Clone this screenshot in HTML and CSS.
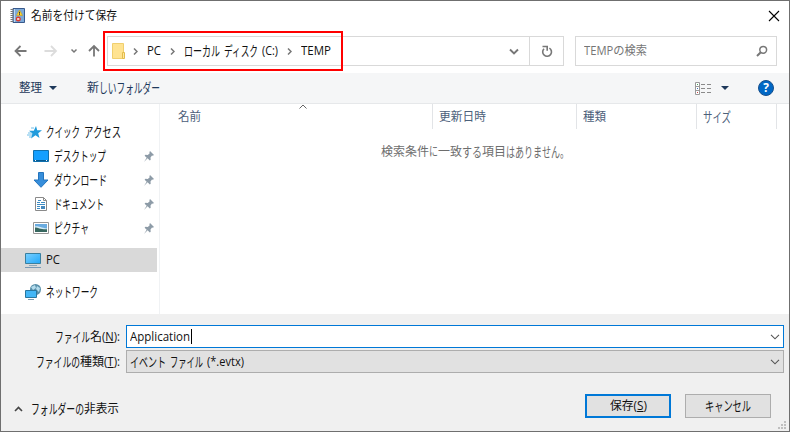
FILE: index.html
```html
<!DOCTYPE html>
<html lang="ja">
<head>
<meta charset="utf-8">
<title>名前を付けて保存</title>
<link rel="stylesheet" href="styles.css">
</head>
<body>
<div class="dialog">
  <header class="titlebar">
    <svg class="app-icon" width="16" height="16" viewBox="0 0 16 16">
      <path d="M3 .5h11.500v14H3z" fill="#7da9d8" stroke="#38598c"/>
      <path d="M4.500 1v13" stroke="#bfd8f0"/>
      <path d="M.5 1.500h3M.5 3.500h3M.5 5.500h3M.5 7.500h3M.5 9.500h3M.5 11.500h3M.5 13.500h3" stroke="#777"/>
      <path d="M9.500 2L12.500 7.500h-6z" fill="#ffd52e" stroke="#c8a11b" stroke-width=".6"/>
      <path d="M9.500 3.800v1.900M9.500 6.200v.8" stroke="#333"/>
      <circle cx="8.300" cy="11" r="2.500" fill="#db392b"/>
      <path d="M7.300 10l2 2M9.300 10l-2 2" stroke="#fff" stroke-width=".9"/>
    </svg>
    <h1><span data-w="86">名前を付けて保存</span></h1>
    <svg class="close" width="12" height="12" viewBox="0 0 12 12"><path d="M1 1l10 10M11 1L1 11" stroke="#000" stroke-width="1.100"/></svg>
  </header>

  <nav class="navbar">
    <svg class="arrows" width="86" height="20" viewBox="0 0 86 20" fill="none">
      <path d="M12.500 10H1.500M6.500 5L1.500 10l5 5" stroke="#777" stroke-width="1.800"/>
      <path d="M30.500 10H42M37 5l5 5-5 5" stroke="#dcdcdc" stroke-width="1.800"/>
      <path d="M57.500 8.500l2.500 2.500 2.500-2.500" stroke="#777" stroke-width="1.500"/>
      <path d="M80 15.500V5M75 10l5-5 5 5" stroke="#777" stroke-width="1.800"/>
    </svg>
    <div class="address">
      <svg class="folder" width="14" height="17" viewBox="0 0 14 17"><path d="M.5.500h11v15H.5z" fill="#ffe391" stroke="#f0cf6e"/><path d="M10.500 9.500h2v6h-2z" fill="#ffe79d" stroke="#e3bc4c"/></svg>
      <svg class="sep s1" width="5" height="7" viewBox="0 0 5 7"><path d="M1 .5l3 3-3 3"/></svg>
      <span class="crumb c1"><span data-w="14">PC</span></span>
      <svg class="sep s2" width="5" height="7" viewBox="0 0 5 7"><path d="M1 .5l3 3-3 3"/></svg>
      <span class="crumb c2"><span class="kana" data-w="36">ローカル</span><i class="space"></i><span class="kana" data-w="34">ディスク</span><i class="space"></i><span data-w="16">(C:)</span></span>
      <svg class="sep s3" width="5" height="7" viewBox="0 0 5 7"><path d="M1 .5l3 3-3 3"/></svg>
      <span class="crumb c3"><span data-w="30">TEMP</span></span>
      <svg class="history" width="10" height="7" viewBox="0 0 10 7"><path d="M1 1.500L5 5.500l4-4"/></svg>
      <div class="refresh"><svg width="12" height="13" viewBox="0 0 12 13"><path d="M8.400 3.100A4.400 4.400 0 1 1 3 3.700M1.500 1.500h4.700v4.200" fill="none" stroke="#777" stroke-width="1.600"/></svg></div>
      <div class="highlight"></div>
    </div>
    <div class="search"><span data-w="63">TEMPの検索</span>
      <svg width="12" height="12" viewBox="0 0 12 12" fill="none" stroke="#777"><circle cx="7.200" cy="4.800" r="3.400" stroke-width="1.500"/><path d="M4.800 7.200L1 11" stroke-width="2"/></svg>
    </div>
  </nav>

  <div class="toolbar">
    <span class="organize"><span data-w="23">整理</span></span>
    <i class="tri"></i>
    <span class="newfolder"><span data-w="12">新</span><span class="kana" data-w="61">しいフォルダー</span></span>
    <svg class="view" width="17" height="13" viewBox="0 0 17 13"><path d="M.5.500h4v12h-4zM.5 4.500h4M.5 8.500h4" fill="#fff" stroke="#999"/><path d="M6 2.500h4M12 2.500h4M6 6.500h4M12 6.500h4M6 10.500h4M12 10.500h4" stroke="#8a8a8a"/><path d="M2 2h1v1H2z" fill="#45a05c"/><path d="M2 6h1v1H2z" fill="#446fba"/><path d="M2 10h1v1H2z" fill="#cc4545"/></svg>
    <i class="tri view-tri"></i>
    <span class="help">?</span>
  </div>

  <main class="browser">
    <aside class="sidebar">
      <div class="row">
        <svg class="ic top" width="15" height="13" viewBox="0 0 15 13"><path d="M9 0l1.200 4.200H15l-3.800 3L12.500 12 8.500 9.200 4 12.500l1.400-5L2 4.700h4.800z" fill="#209bdc"/><path d="M0 9h5M1 7h4M2 11h3M4 2h3" stroke="#70bfe8"/></svg>
        <span class="label top-label"><span class="kana" data-w="34">クイック</span><i class="space"></i><span class="kana" data-w="37">アクセス</span></span>
      </div>
      <div class="row">
        <svg class="ic" width="16" height="12" viewBox="0 0 16 12"><path d="M.5.500h15v11H.5z" fill="#149fff" stroke="#1070ae"/><path d="M1 10.500h14" stroke="#075a91"/><path d="M2 10.500h1M13 10.500h1" stroke="#fff"/></svg>
        <span class="label"><span class="kana" data-w="52">デスクトップ</span></span>
        <svg class="pin" width="10" height="11" viewBox="0 0 10 11"><path d="M6 0l4 4-1.200.7-.8-.2-1.500 2 .2 2.200-.9.800-2.200-2.200L0 11l2.700-4.200L.6 4.700l.8-1 2.400.2 1.900-1.700-.3-1z" fill="#8d9ba7"/></svg>
      </div>
      <div class="row">
        <svg class="ic" width="16" height="16" viewBox="0 0 16 16"><path d="M5.500.5h5v7.500H15L8 15.300 1 8h4.500z" fill="#368edb" stroke="#2474bd"/></svg>
        <span class="label"><span class="kana" data-w="53">ダウンロード</span></span>
        <svg class="pin" width="10" height="11" viewBox="0 0 10 11"><path d="M6 0l4 4-1.200.7-.8-.2-1.500 2 .2 2.200-.9.800-2.200-2.200L0 11l2.700-4.200L.6 4.700l.8-1 2.400.2 1.900-1.700-.3-1z" fill="#8d9ba7"/></svg>
      </div>
      <div class="row">
        <svg class="ic" width="16" height="14" viewBox="0 0 16 14"><path d="M2.500.5h8l3 3v10h-11z" fill="#fff" stroke="#8a8a8a"/><path d="M10.500.5v3h3" fill="none" stroke="#8a8a8a"/><path d="M4 5.500h3M8 5.500h4M4 7.500h8M4 9.500h3M4 11.500h3M5 3.500h3" stroke="#3e8cc4"/><path d="M8 9h4v3H8z" fill="#4588bd"/></svg>
        <span class="label"><span class="kana" data-w="50">ドキュメント</span></span>
        <svg class="pin" width="10" height="11" viewBox="0 0 10 11"><path d="M6 0l4 4-1.200.7-.8-.2-1.500 2 .2 2.200-.9.800-2.200-2.200L0 11l2.700-4.200L.6 4.700l.8-1 2.400.2 1.900-1.700-.3-1z" fill="#8d9ba7"/></svg>
      </div>
      <div class="row">
        <svg class="ic" width="16" height="12" viewBox="0 0 16 12"><path d="M.5.500h15v11H.5z" fill="#fff" stroke="#969696"/><path d="M2 2h12v8H2z" fill="#69abe0"/><path d="M2 4.500c3-1 5 1 12 2V8H2z" fill="#d4ebf5"/><path d="M2 5.500c3 0 5 2 12 1.800V10H2z" fill="#37675f"/></svg>
        <span class="label"><span class="kana" data-w="35">ピクチャ</span></span>
        <svg class="pin" width="10" height="11" viewBox="0 0 10 11"><path d="M6 0l4 4-1.200.7-.8-.2-1.500 2 .2 2.200-.9.800-2.200-2.200L0 11l2.700-4.200L.6 4.700l.8-1 2.400.2 1.900-1.700-.3-1z" fill="#8d9ba7"/></svg>
      </div>
      <div class="row selected">
        <svg class="ic root" width="16" height="15" viewBox="0 0 16 15"><defs><linearGradient id="screen" x2="1" y2="1"><stop stop-color="#7ad0ff"/><stop offset="1" stop-color="#22a7f8"/></linearGradient></defs><path d="M.5.500h15v10H.5z" fill="url(#screen)" stroke="#397f9f"/><path d="M4 12.500h8" stroke="#8fa9b9"/><path d="M0 14.500h16" stroke="#7899b5"/></svg>
        <span class="label top-label"><span data-w="14">PC</span></span>
      </div>
      <div class="row network">
        <svg class="ic root" width="16" height="16" viewBox="0 0 16 16"><circle cx="10.500" cy="5.500" r="5.500" fill="#588fa9"/><path d="M6 3l4-2 1 3-3 2zM12 2l3 2-1 4-3-3z" fill="#b3dced"/><path d="M.5 6.500h11v7H.5z" fill="#42b6f6" stroke="#28769f"/><path d="M3 15.500h6" stroke="#7c9db1"/></svg>
        <span class="label top-label"><span class="kana" data-w="52">ネットワーク</span></span>
      </div>
    </aside>
    <section class="files">
      <div class="columns">
        <div class="col name"><span data-w="23">名前</span><svg class="sort" width="8" height="5" viewBox="0 0 8 5"><path d="M.5 4.500L4 1l3.500 3.500" fill="none" stroke="#666"/></svg></div>
        <div class="col date"><span data-w="47">更新日時</span></div>
        <div class="col kind"><span data-w="23">種類</span></div>
        <div class="col size"><span class="kana" data-w="28">サイズ</span></div>
      </div>
      <p class="empty"><span data-w="48">検索条件</span><span data-w="9">に</span><span data-w="12">一</span><span data-w="12">致</span><span class="kana" data-w="20">する</span><span data-w="24">項目</span><span class="kana" data-w="63">はありません。</span></p>
    </section>
  </main>

  <footer class="form">
    <div class="field">
      <label><span class="kana" data-w="35">ファイル</span><span data-w="12">名</span><span data-w="18">(<u>N</u>):</span></label>
      <div class="combo input"><span data-w="60">Application</span><i class="caret"></i><svg width="10" height="6" viewBox="0 0 10 6"><path d="M1 .8l4 4 4-4"/></svg></div>
    </div>
    <div class="field second">
      <label><span class="kana" data-w="44">ファイルの</span><span data-w="24">種類</span><span data-w="16">(<u>T</u>):</span></label>
      <div class="combo"><span class="kana" data-w="36">イベント</span><i class="space"></i><span class="kana" data-w="33">ファイル</span><i class="space"></i><span data-w="37">(*.evtx)</span><svg width="10" height="6" viewBox="0 0 10 6"><path d="M1 .8l4 4 4-4"/></svg></div>
    </div>
    <div class="actions">
      <svg class="fold" width="9" height="6" viewBox="0 0 9 6"><path d="M1 5l3.500-3.500L8 5" fill="none" stroke="#444" stroke-width="1.600"/></svg>
      <span class="hide"><span class="kana" data-w="53">フォルダーの</span><span data-w="35">非表示</span></span>
      <button class="primary"><span data-w="37">保存(<u>S</u>)</span></button>
      <button><span class="kana" data-w="46">キャンセル</span></button>
    </div>
    <svg class="grip" width="8" height="8" viewBox="0 0 8 8"><path d="M6 0h2v2H6zM3 3h2v2H3zM6 3h2v2H6zM0 6h2v2H0zM3 6h2v2H3zM6 6h2v2H6z" fill="#bfbfbf"/></svg>
  </footer>
</div>
<script src="fit.js"></script>
</body>
</html>
```
FILE: styles.css
```css
* { box-sizing: border-box; }
body { margin: 0; font: 12px/18px "Open Sans", "Noto Sans CJK JP", sans-serif; color: #111; }
svg { display: block; flex: none; }
[data-w] { display: inline-block; white-space: pre; transform-origin: 0 50%; flex: none; }
.kana { font-size: 13.5px; }
.dialog { width: 790px; height: 432px; border: 1px solid #6f6f6f; background: #fff; display: flex; flex-direction: column; overflow: hidden; }

.titlebar { height: 30px; display: flex; align-items: center; padding: 0 9px; }
.app-icon { margin-top: -1px; }
h1 { margin: 0 auto 0 5px; font-size: 12px; font-weight: 400; }

.navbar { height: 42px; display: flex; padding: 5px 12px 0 13px; }
.arrows { margin: 5px 7px 0 0; }
.address { position: relative; width: 457px; height: 30px; border: 1px solid #d9d9d9; display: flex; align-items: center; }
.folder { margin-left: 4px; }
.sep { fill: none; stroke: #777; stroke-width: 1.5; }
.s1 { margin-left: 7px; }
.crumb { margin-left: 9px; display: flex; align-items: center; }
.s2, .s3 { margin-left: 9px; }
.history { margin-left: auto; margin-right: 10px; fill: none; stroke: #777; stroke-width: 1.9; }
.refresh { width: 34px; height: 28px; border-left: 1px solid #d9d9d9; display: flex; align-items: center; justify-content: center; }
.highlight { position: absolute; left: -5px; top: -6px; width: 240px; height: 40px; border: 2px solid #f00; }
.search { margin-left: 11px; width: 202px; height: 30px; border: 1px solid #d9d9d9; display: flex; align-items: center; justify-content: space-between; padding: 0 8px; color: #757575; }

.toolbar { height: 31px; background: #f5f6f7; border-bottom: 1px solid #e6e8ea; display: flex; align-items: center; padding: 0 15px 0 18px; color: #1e395b; }
.tri { width: 0; height: 0; border: 4px solid transparent; border-top-color: #1e395b; border-bottom: 0; margin-left: 7px; }
.newfolder { margin-left: 30px; display: flex; }
.view { margin-left: auto; }
.view-tri { margin-left: 9px; }
.help { margin-left: 29px; width: 16px; height: 16px; border-radius: 50%; background: #0067c5; border: 1px solid #174f8b; color: #fff; font: 700 12px/14px "Open Sans", sans-serif; text-align: center; }

.browser { height: 210px; display: flex; }
.sidebar { width: 159px; border-right: 1px solid #f0f2f4; padding-top: 16px; }
.row { height: 24px; display: flex; align-items: center; padding-left: 32px; margin-right: 2px; }
.ic.top { margin-left: -6px; }
.ic.root { margin-left: -8px; }
.label { margin-left: 5px; display: flex; }
.row:first-child .label { margin-left: 4px; }
.space { width: 4px; }
.pin { margin-left: auto; margin-right: 3px; }
.selected { background: #d9d9d9; margin-top: 8px; }
.network { margin-top: 8px; }
.files { flex: 1; }
.columns { display: flex; height: 25px; padding-left: 12px; color: #4c607a; }
.col { position: relative; border-right: 1px solid #e2e4e7; padding: 4px 0 0 6px; }
.name { width: 261px; }
.date { width: 144px; }
.kind { width: 120px; }
.size { width: 80px; }
.sort { position: absolute; left: 127px; top: 0; }
.empty { margin: 14px 0 0 221px; display: flex; color: #6d6d6d; }

.form { position: relative; flex: 1; background: #f0f0f0; padding: 11px 5px 0 0; }
.field { display: flex; height: 23px; align-items: center; }
.second { margin-top: 2px; }
label { width: 125px; padding-right: 6px; display: flex; justify-content: flex-end; }
.combo { flex: 1; height: 23px; border: 1px solid #adadad; background: #e1e1e1; display: flex; align-items: center; padding: 0 3px; }
.input { background: #fff; border-color: #0078d7; }
.combo svg { margin-left: auto; fill: none; stroke: #555; stroke-width: 1.1; }
.caret { width: 1px; height: 15px; background: #000; margin-left: 1px; }
.actions { display: flex; align-items: center; margin-top: 21px; padding: 0 13px; }
.hide { margin: 5px 0 0 8px; display: flex; }
.fold { margin-top: 5px; }
button { width: 86px; height: 24px; border: 1px solid #adadad; background: #e1e1e1; padding: 0; margin-left: 14px; font: inherit; color: inherit; display: flex; align-items: center; justify-content: center; }
.primary { border: 2px solid #0078d7; margin-left: auto; }
.grip { position: absolute; right: 3px; bottom: 2px; }
```
FILE: fit.js
```js
document.querySelectorAll('[data-w]').forEach(function (run) {
  var natural = run.getBoundingClientRect().width;
  var width = Number(run.dataset.w);
  run.style.transform = 'scaleX(' + width / natural + ')';
  run.style.marginRight = (width - natural) + 'px';
});
```
